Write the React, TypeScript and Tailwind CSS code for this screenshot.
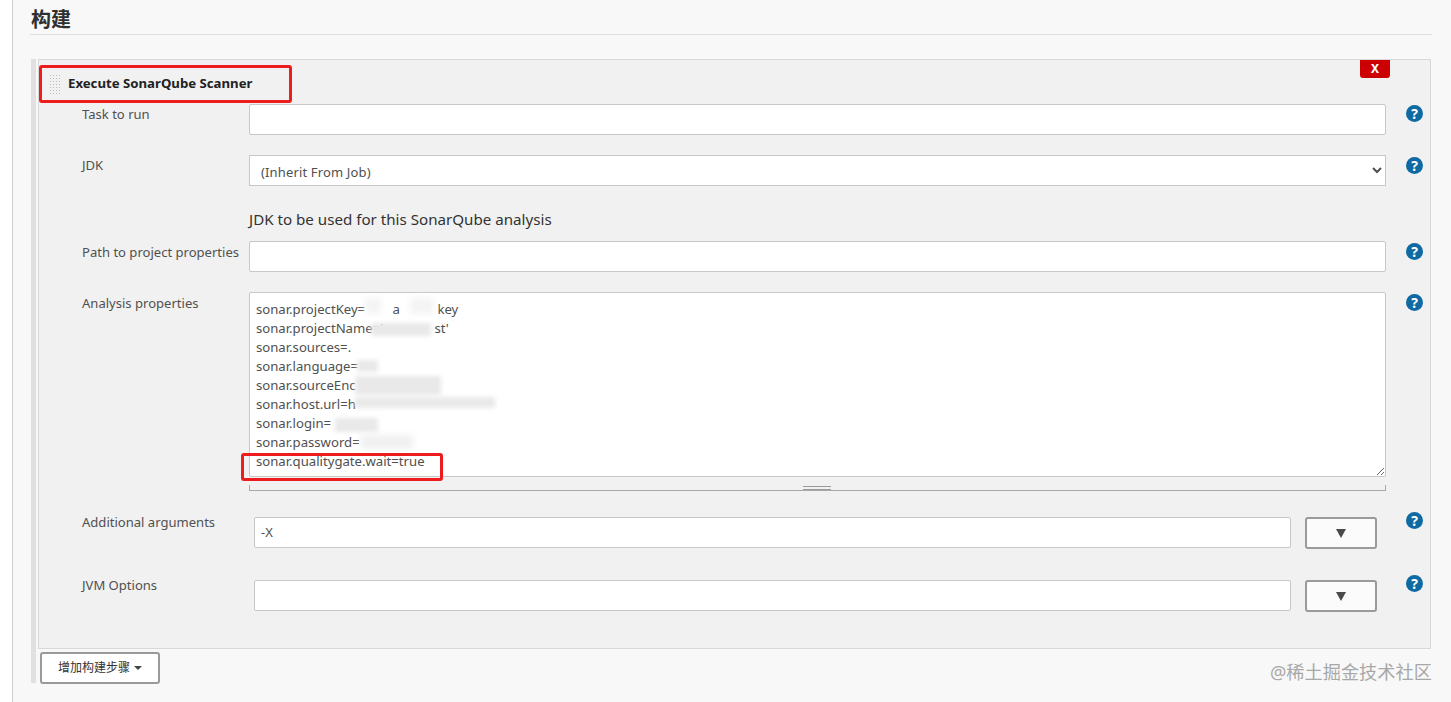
const font = { fontFamily: '"Noto Sans", "Noto Sans CJK SC", sans-serif' }

function Help({ className = 'ml-[20px] mt-[2px]' }: { className?: string }) {
  return (
    <div className={`w-[17px] h-[17px] rounded-full bg-[#0f6aa3] text-white flex items-center justify-center text-[14px] font-bold leading-none shrink-0 ${className}`}>
      ?
    </div>
  )
}

function DropButton() {
  return (
    <div className="mt-[5px] w-[72px] h-[32px] ml-[14px] bg-[#fbfbfb] border-2 border-[#9a9a9a] rounded-[3px] flex items-center justify-center shrink-0">
      <div className="w-0 h-0 border-l-[5px] border-r-[5px] border-t-[9px] border-l-transparent border-r-transparent border-t-[#4a4a4a]" />
    </div>
  )
}

const inputCls = 'block w-full h-[31px] bg-white border border-[#c8c8c8] rounded-[2px] outline-none'
const labelCls = 'ml-[43px] w-[167px] text-[13.05px] leading-[20px] text-[#505050]'
const wideLabelCls = 'ml-[43px] w-[172px] text-[13.05px] leading-[20px] text-[#505050]'
const smudgeCls = 'absolute bg-[#e9e9e9] blur-[2px]'

const props = [
  'sonar.projectKey=        a           key',
  "sonar.projectName='               st'",
  'sonar.sources=.',
  'sonar.language=',
  'sonar.sourceEnc',
  'sonar.host.url=h',
  'sonar.login=',
  'sonar.password=',
  'sonar.qualitygate.wait=true',
].join('\n')

export default function App() {
  return (
    <div className="relative h-[702px] w-[1451px] overflow-hidden bg-white pl-[12px] text-[#333]" style={font}>
      <div className="h-full w-[1439px] border-l border-[#cfcfcf] bg-[#f8f8f8] pl-[17px] pt-[5px]">
        <h2 className="w-[1402px] h-[30px] border-b border-[#dedede] pl-[1px] text-[20px] leading-[30px] font-bold text-[#2f2f2f]">构建</h2>

        <div className="mt-[24px] ml-[1px] w-[1400px] border-l-[5px] border-[#e0e0e0] pl-[2px] h-[624px]">
          <div className="relative h-[590px] w-[1393px] border border-[#d8d8d8] bg-[#f1f1f1]">
            <div className="absolute right-[40px] top-0 h-[18px] w-[30px] rounded-b-[3px] bg-[#cc0003] text-center text-[12px] font-bold leading-[18px] text-white">
              X
            </div>

            <div className="flex h-[44px] items-center pl-[10px] pt-[3px]">
              <div className="h-[20px] w-[12px] bg-[radial-gradient(#bbbbbb_1px,transparent_1px)] bg-[length:3px_3px]" />
              <span className="ml-[7px] text-[13.2px] font-bold text-[#222]">Execute SonarQube Scanner</span>
            </div>

            <div className="flex">
              <label className={labelCls}>Task to run</label>
              <div className="w-[1137px]"><input className={inputCls} /></div>
              <Help className="ml-[20px] mt-[1px]" />
            </div>

            <div className="mt-[20px] flex">
              <label className={labelCls}>JDK</label>
              <div className="w-[1137px]">
                <select className="block h-[31px] w-full border border-[#c8c8c8] bg-white pl-[7px] pt-[3px] text-[13px] tracking-[0.15px] text-[#505050] outline-none">
                  <option>(Inherit From Job)</option>
                </select>
              </div>
              <Help />
            </div>

            <div className="ml-[210px] mt-[21px] text-[15.15px] leading-[24px] text-[#333]">JDK to be used for this SonarQube analysis</div>

            <div className="mt-[10px] flex">
              <label className={`${labelCls} pt-[1px]`}>Path to project properties</label>
              <div className="w-[1137px]"><input className={inputCls} /></div>
              <Help />
            </div>

            <div className="mt-[20px] flex">
              <label className={`${labelCls} pt-[1px]`}>Analysis properties</label>
              <div className="relative w-[1137px]">
                <textarea
                  readOnly
                  defaultValue={props}
                  className="block h-[185px] w-full resize-y overflow-hidden whitespace-pre rounded-[2px] border border-[#c8c8c8] bg-white px-[6px] pt-[7px] text-[13.15px] leading-[19px] text-[#505050] outline-none"
                />
                <div className="relative h-[14px] border-b border-[#a8a8a8]">
                  <div className="absolute bottom-0 left-0 h-[5px] w-px bg-[#a8a8a8]" />
                  <div className="absolute bottom-0 right-0 h-[5px] w-px bg-[#a8a8a8]" />
                  <div className="absolute left-[554px] top-[9px] h-[4px] w-[28px] border-y border-[#9a9a9a]" />
                </div>
                {/* blurred-out values */}
                <div className="absolute left-[116px] top-[6px] h-[16px] w-[16px] bg-[#f4f4f4] blur-[3px]" />
                <div className="absolute left-[161px] top-[6px] h-[16px] w-[24px] bg-[#f4f4f4] blur-[3px]" />
                <div className={`${smudgeCls} left-[122px] top-[31px] h-[13px] w-[60px]`} />
                <div className={`${smudgeCls} left-[108px] top-[68px] h-[12px] w-[21px]`} />
                <div className={`${smudgeCls} left-[106px] top-[84px] h-[19px] w-[86px]`} />
                <div className={`${smudgeCls} left-[106px] top-[105px] h-[11px] w-[140px]`} />
                <div className={`${smudgeCls} left-[86px] top-[126px] h-[14px] w-[43px]`} />
                <div className="absolute left-[112px] top-[143px] h-[14px] w-[52px] bg-[#f0f0f0] blur-[3px]" />
              </div>
              <Help />
            </div>

            <div className="mt-[21px] flex">
              <label className={wideLabelCls}>Additional arguments</label>
              <input defaultValue="-X" className="mt-[5px] block h-[31px] w-[1037px] rounded-[2px] border border-[#c8c8c8] bg-white px-[6px] pb-[2px] text-[13px] text-[#505050] outline-none" />
              <DropButton />
              <Help className="ml-[29px]" />
            </div>

            <div className="mt-[26px] flex">
              <label className={wideLabelCls}>JVM Options</label>
              <input className="mt-[5px] block h-[31px] w-[1037px] rounded-[2px] border border-[#c8c8c8] bg-white outline-none" />
              <DropButton />
              <Help className="ml-[29px]" />
            </div>
          </div>

          <button className="ml-[2px] mt-[3px] flex h-[32px] w-[120px] items-center justify-center gap-[4px] rounded-[3px] border-2 border-[#9a9a9a] bg-white text-[12px] text-[#333]">
            增加构建步骤
            <span className="h-0 w-0 border-l-[4px] border-r-[4px] border-t-[4px] border-l-transparent border-r-transparent border-t-[#444]" />
          </button>
        </div>
      </div>

      {/* annotations drawn on top of the screenshot */}
      <div className="absolute left-[39px] top-[65px] h-[38px] w-[253px] rounded-[3px] border-[3px] border-[#ee1c1c]" />
      <div className="absolute left-[241px] top-[453px] h-[28px] w-[202px] rounded-[3px] border-[3px] border-[#ee1c1c]" />
      <div className="absolute left-[1270px] top-[660px] text-[18.2px] leading-[24px] text-[#a8a8a8]">@稀土掘金技术社区</div>
    </div>
  )
}
